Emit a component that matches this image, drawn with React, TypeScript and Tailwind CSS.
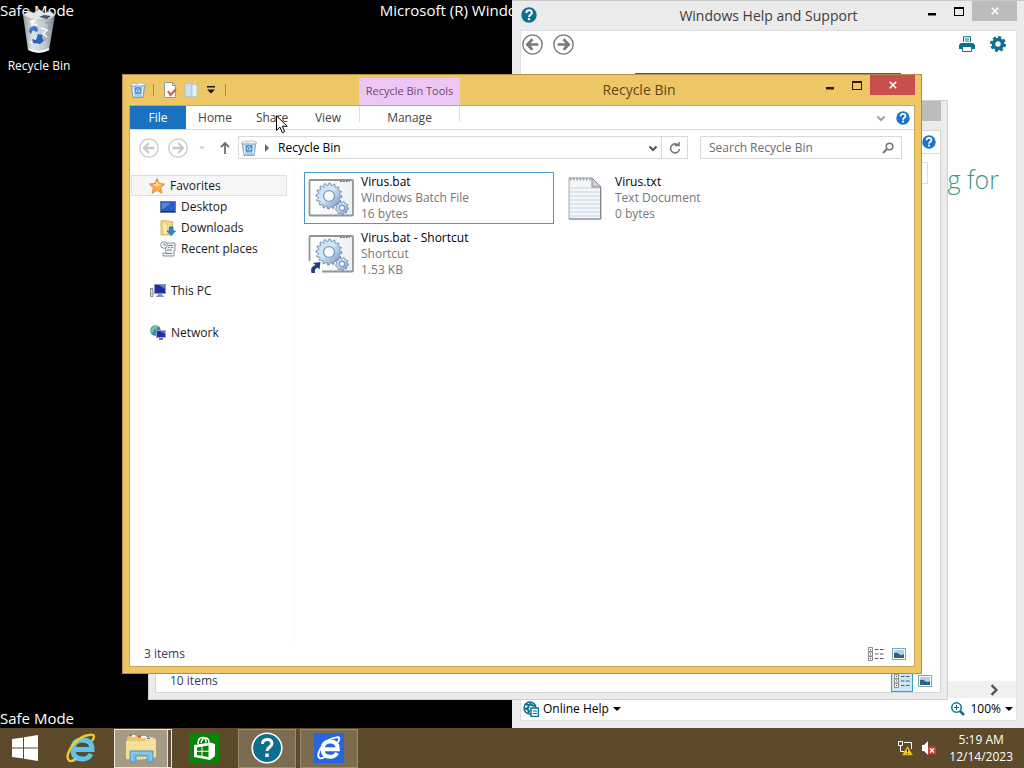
import React from "react";

function BinIcon({ className }: { className: string }) {
  return (
    <svg viewBox="0 0 16 16" className={className} aria-hidden="true">
      <path d="M1 2.500h14l-2 13H3z" fill="#a9cde8" stroke="#7b93a8" strokeWidth=".8" />
      <path d="M.8 2l3-1 3 1 3-1.400L15.200 2v1.800H.8z" fill="#eef6fb" stroke="#8ba0b0" strokeWidth=".6" />
      <path d="M3 5l1 9M13 5l-1 9" stroke="#f4fafd" strokeWidth=".9" />
      <rect x="4.800" y="5.300" width="6.400" height="6.400" rx="1" fill="#4a90d2" />
      <path d="M6.400 9.800V8l1.500-1.400L9.600 8v1.800H7.400" fill="none" stroke="#e2f1fb" strokeWidth=".9" />
    </svg>
  );
}

function DesktopBin() {
  return (
    <svg viewBox="0 0 36 46" className="h-[46px] w-9" aria-hidden="true">
      <defs>
        <linearGradient id="bin" x1="0" x2="1">
          <stop offset="0" stopColor="#94989d" />
          <stop offset=".3" stopColor="#dfe4e9" />
          <stop offset=".7" stopColor="#bcc5ce" />
          <stop offset="1" stopColor="#7b8289" />
        </linearGradient>
      </defs>
      <path d="M2 6l5 35q11 6 21 0l6-35z" fill="url(#bin)" />
      <path d="M2 6l6-4 5 2 5-4 5 4 6-2 5 4-5 4-9 1-11-1z" fill="#e4e6e7" stroke="#9aa0a6" strokeWidth=".7" />
      <path d="M18 8l5-2 7 1-4 3z" fill="#4c5258" />
      <path d="M24 14l7-1-4 4 3 2-6 3 4 3-5 3 2 4" fill="none" stroke="#8a949e" strokeWidth="1" />
      <path d="M9 13l5-2-3 4 5 1M9 34l5-3 3 5M20 19l6 2-4 4 4 3" fill="none" stroke="#fff" strokeWidth="1.500" />
      <path d="M8 23q0-6 6-6 3 1 3 5l-2 1-3-2-2 4z" fill="#3f76c8" />
      <path d="M17 25l5 1-1 2 2 4-4 3-7-1-1-4 4 1z" fill="#2c63bd" />
      <path d="M8 40q10 5 20 0" fill="none" stroke="#f3f3f3" strokeWidth="2" />
    </svg>
  );
}

function HelpDisc({ className, fill }: { className: string; fill: string }) {
  return (
    <svg viewBox="0 0 16 16" className={className} aria-hidden="true">
      <circle cx="8" cy="8" r="7.700" fill={fill} />
      <path d="M5.300 6q0-2.700 2.800-2.700T10.900 5.800q0 1.100-1.400 2T8 10" fill="none" stroke="#fff" strokeWidth="2" />
      <rect x="6.900" y="11" width="2.200" height="2.200" fill="#fff" />
    </svg>
  );
}

function CircleArrow({ className, flip }: { className: string; flip?: boolean }) {
  return (
    <svg viewBox="0 0 20 20" className={className} fill="none" stroke="currentColor" aria-hidden="true">
      <circle cx="10" cy="10" r="9.200" strokeWidth="1.300" />
      <path
        d={flip ? "M4.500 10H15M10 5l5 5-5 5" : "M15.500 10H5M10 5l-5 5 5 5"}
        strokeWidth="2.400"
      />
    </svg>
  );
}

function Chevron({ className, right }: { className: string; right?: boolean }) {
  return (
    <svg viewBox="0 0 10 10" className={className} fill="none" stroke="currentColor" strokeWidth="2" aria-hidden="true">
      <path d={right ? "M3 1l4 4-4 4" : "M1.500 3.500L5 7l3.500-3.500"} />
    </svg>
  );
}

function Caret({ className, right }: { className: string; right?: boolean }) {
  return (
    <svg viewBox="0 0 8 8" className={className} fill="currentColor" aria-hidden="true">
      <path d={right ? "M2 0l4 4-4 4z" : "M0 2h8L4 6z"} />
    </svg>
  );
}

function CaptionButtons({ closeClass, markClass }: { closeClass: string; markClass: string }) {
  return (
    <div className="flex items-start">
      <button aria-label="Minimize" className="flex h-5 w-[26px] items-center justify-center">
        <svg viewBox="0 0 26 20" className={`h-5 w-[26px] ${markClass}`}>
          <path d="M8 12h8v2.500H8z" fill="currentColor" />
        </svg>
      </button>
      <button aria-label="Maximize" className="flex h-5 w-[26px] items-center justify-center">
        <svg viewBox="0 0 26 20" className={`h-5 w-[26px] ${markClass}`}>
          <path d="M8 6h10v9H8zM9 8v6h8V8z" fill="currentColor" fillRule="evenodd" />
        </svg>
      </button>
      <button aria-label="Close" className={`flex h-5 w-[45px] items-center justify-center text-white ${closeClass}`}>
        <svg viewBox="0 0 10 10" className="h-2 w-2" stroke="currentColor" strokeWidth="2">
          <path d="M1 1l8 8M9 1L1 9" />
        </svg>
      </button>
    </div>
  );
}

function DetailsIcon() {
  return (
    <svg viewBox="0 0 16 14" className="h-3.5 w-4" aria-hidden="true">
      <path d="M.5.5h4v4h-4zM.5 5h4v4h-4zM.5 9.500h4v4h-4z" fill="#fff" stroke="#8a8a8a" />
      <path d="M2 2.500h1M2 7h1M2 11.500h1" stroke="#333" />
      <path d="M7 2.500h3.500M12 2.500h3.500M7 7h3.500M12 7h3.500M7 11.500h3.500M12 11.500h3.500" stroke="#555" />
    </svg>
  );
}

function ThumbIcon() {
  return (
    <svg viewBox="0 0 14 12" className="h-3 w-3.5" aria-hidden="true">
      <rect x=".5" y=".5" width="13" height="11" fill="#fff" stroke="#7da4ba" />
      <path d="M2 2h10v8H2z" fill="#a9d3ea" />
      <path d="M2 5q3-1 5 1t5 0v4H2z" fill="#2e6670" />
    </svg>
  );
}

function Gear({ cx, cy, r, teeth }: { cx: number; cy: number; r: number; teeth: number }) {
  const points: string[] = [];
  for (let i = 0; i < teeth * 4; i++) {
    const radius = i % 4 < 2 ? r : r * 0.82;
    const angle = (i / (teeth * 4)) * 2 * Math.PI;
    points.push(`${(cx + radius * Math.cos(angle)).toFixed(2)},${(cy + radius * Math.sin(angle)).toFixed(2)}`);
  }
  return (
    <g>
      <polygon points={points.join(" ")} fill="url(#gear)" stroke="#6f87ad" strokeWidth=".9" />
      <circle cx={cx} cy={cy} r={r * 0.42} fill="#f7f9fb" stroke="#8299c0" strokeWidth="1.300" />
    </g>
  );
}

function BatchIcon({ shortcut }: { shortcut?: boolean }) {
  return (
    <svg viewBox="0 0 46 40" className="h-10 w-[46px]" aria-hidden="true">
      <defs>
        <linearGradient id="gear" x1="0" y1="0" x2="1" y2="1">
          <stop offset="0" stopColor="#c2dcec" />
          <stop offset=".45" stopColor="#d0ebf7" />
          <stop offset="1" stopColor="#6c84b8" />
        </linearGradient>
        <linearGradient id="sheet" x1="0" y1="0" x2="1" y2="0">
          <stop offset="0" stopColor="#fff" />
          <stop offset="1" stopColor="#edf0f3" />
        </linearGradient>
      </defs>
      <rect x="1.500" y="2" width="43.500" height="35.500" rx="1" fill="url(#sheet)" stroke="#929496" strokeWidth="1.800" />
      <path d="M32 3.500h10" stroke="#777" strokeDasharray="2 1" />
      <Gear cx={21} cy={18} r={13} teeth={16} />
      <Gear cx={34} cy={30} r={6.500} teeth={9} />
      {shortcut && (
        <g>
          <path d="M0 27h14v13H0z" fill="#fff" />
          <path d="M3.500 39q-2-6 4-8L5 29l7.500-1-1 7.500-2-2Q6 35 7 39z" fill="#1f3f80" />
        </g>
      )}
    </svg>
  );
}

function TextIcon() {
  return (
    <svg viewBox="0 0 34 44" className="h-11 w-[34px]" aria-hidden="true">
      <path d="M1 2h23l9 9v32H1z" fill="#f3f7fa" stroke="#a2a6aa" />
      <path d="M2 12h30M2 16h30M2 20h30M2 24h30M2 28h30M2 32h30M2 36h30M2 40h30" stroke="#c3d3e4" />
      <path d="M24 2v9h9z" fill="#d0d3d6" stroke="#85898d" />
      <path d="M2 3h22" stroke="#9b9ea1" strokeWidth="3" strokeDasharray="1.500 1.700" />
      <path d="M32.500 11v32H1" fill="none" stroke="#85898d" />
    </svg>
  );
}

function StarIcon() {
  return (
    <svg viewBox="0 0 16 16" className="h-4 w-4" aria-hidden="true">
      <path d="M8 .5l2.300 5 5.400.5-4 3.600 1.200 5.600L8 12.300l-4.900 2.900 1.200-5.600L.3 6l5.400-.5z" fill="#fba94a" stroke="#d9822b" strokeWidth=".8" />
      <path d="M8 3l1.300 3.300 3.200.3L8 8.500 4 6.600l2.800-.3z" fill="#fee69f" />
    </svg>
  );
}

function MonitorIcon() {
  return (
    <svg viewBox="0 0 16 16" className="h-4 w-4" aria-hidden="true">
      <rect x=".5" y="2.500" width="15" height="11" fill="#2b5fc4" stroke="#6d7d93" />
      <path d="M2 4h9L3 10H2z" fill="#5088e4" />
      <path d="M1 12.500h14" stroke="#20304e" />
    </svg>
  );
}

function DownloadsIcon() {
  return (
    <svg viewBox="0 0 16 16" className="h-4 w-4" aria-hidden="true">
      <path d="M1 .8h7l4.500 1V15H1z" fill="#f1da83" stroke="#c8a94b" strokeWidth=".8" />
      <path d="M3 2l4 2v11l-4-1.500z" fill="#fdf0b5" stroke="#d3b661" strokeWidth=".5" />
      <path d="M9.500 7h3.500v4h2.500L11.200 15.500 7 11h2.500z" fill="#2d8bdc" stroke="#1a65ad" strokeWidth=".8" />
    </svg>
  );
}

function RecentIcon() {
  return (
    <svg viewBox="0 0 16 16" className="h-4 w-4" aria-hidden="true">
      <path d="M5 2h10v8h-1v5H3v-3h3z" fill="#eef0f1" stroke="#8d9297" />
      <circle cx="4" cy="4" r="3.300" fill="#fff" stroke="#8d9297" />
      <path d="M4 2v2h2M8 4.500h5M8 6.500h1.500M11 6.500h2M7 9h5M6 12.500h6" fill="none" stroke="#7d8388" />
    </svg>
  );
}

function PcIcon() {
  return (
    <svg viewBox="0 0 16 16" className="h-4 w-4" aria-hidden="true">
      <path d="M.5 5.500h2.500v8H.5z" fill="#d6d9dd" stroke="#898e95" />
      <rect x="4.500" y="1.500" width="11" height="9" fill="#1b2dac" stroke="#949aaa" />
      <path d="M9 2h6v4z" fill="#5878df" />
      <path d="M8 11h4v1.500h2V14H6v-1.500h2z" fill="#8f959c" />
    </svg>
  );
}

function NetworkIcon() {
  return (
    <svg viewBox="0 0 16 16" className="h-4 w-4" aria-hidden="true">
      <circle cx="5.500" cy="5.500" r="5.300" fill="#3389bd" />
      <path d="M1 4q3-4 7-3L6 5 4 4 3 8 1 7z" fill="#7ccb7b" />
      <rect x="6.500" y="5.500" width="9" height="7" fill="#1b2dac" stroke="#a4abb9" />
      <path d="M10 6h5v3z" fill="#5878df" />
      <path d="M9 13h4v2H9z" fill="#6f7780" />
    </svg>
  );
}

function ExplorerGlyph() {
  return (
    <svg viewBox="0 0 34 32" className="h-8 w-[34px]" aria-hidden="true">
      <path d="M3 6l2-3h7l2 2h16l1 3v18H2z" fill="#e8c670" />
      <path d="M5 4h6M17 5h5M22 7h6" stroke="#fff" strokeWidth="2" />
      <path d="M5 3.500h3" stroke="#4b9c45" strokeWidth="2" />
      <path d="M14 4.500h3" stroke="#cc503c" strokeWidth="2" />
      <path d="M23 7h3" stroke="#3680cf" strokeWidth="2" />
      <path d="M2 9h18l3-2h9v18q-14 4-30 2z" fill="#f7dc91" />
      <path d="M2 11h29M2 15h30" stroke="#fbe9b5" />
      <path d="M6 30V19h23v11h-6v-6H12v6z" fill="#74bee5" stroke="#4598c8" />
      <path d="M8 21h19v7M8 21v7" fill="none" stroke="#b8e6f8" strokeDasharray="1 1" />
    </svg>
  );
}

function IeGlyph({ className, letter, ring }: { className: string; letter: string; ring: string }) {
  return (
    <svg viewBox="0 0 30 30" className={className} fill="none" aria-hidden="true">
      <path d="M9 16.500h17q0-9.500-9.500-9.500T7 16.500 16.500 26q6 0 8.500-5" stroke={letter} strokeWidth="5" />
      <path d="M26 8q5-8-3-6Q14 3 6 13-1 24 3 27.500q2.500 1.500 7-1.500" stroke={ring} strokeWidth="2.400" />
    </svg>
  );
}

function StoreGlyph() {
  return (
    <svg viewBox="0 0 30 30" className="h-[30px] w-[30px]" aria-hidden="true">
      <path d="M0 0h30v30H0z" fill="#078507" />
      <path d="M5 12l16-2.500 5 1.500v12l-5 4-16-3z" fill="#fff" />
      <path d="M9 11q0-6 4-6.500t4 5M12 10q1-5 4.500-5t3.500 5" fill="none" stroke="#fff" strokeWidth="1.500" />
      <path d="M8 14.500l4.500-.8v4H8zM13.500 13.500l6-1v5.200h-6zM8 18.700h4.500v4L8 22zM13.500 18.700h6v5.200l-6-1z" fill="#078507" />
    </svg>
  );
}

function ViewToggles({ active }: { active?: boolean }) {
  return (
    <div className="flex items-center">
      <button
        aria-label="Details view"
        className={`flex h-[22px] w-[22px] items-center justify-center border ${active ? "border-[#3c9cc9] bg-[#c9e8f7]" : "border-transparent"}`}
      >
        <DetailsIcon />
      </button>
      <button aria-label="Large icons view" className="flex h-[22px] w-6 items-center justify-center">
        <ThumbIcon />
      </button>
    </div>
  );
}

function HelpWindow() {
  return (
    <section aria-label="Windows Help and Support" className="absolute inset-y-0 right-0 left-[512px] flex flex-col border-t border-[#c9c9c9] bg-[#ebebeb] pr-[7px] pb-[7px] pl-2">
      <header className="flex h-[29px] shrink-0 items-start">
        <HelpDisc className="mt-1.5 ml-px h-4 w-4" fill="#0b708f" />
        <h2 className="flex-1 pl-20 text-center text-sm leading-[30px] text-[#3c3c3c]">Windows Help and Support</h2>
        <CaptionButtons closeClass="bg-[#bcbcbc]" markClass="text-black" />
      </header>
      <div className="flex min-h-0 flex-1 flex-col border border-[#e0e0e0] bg-white">
        <div className="flex h-[26px] shrink-0 items-center gap-2.5 pr-2.5 pl-px text-[#777]">
          <button aria-label="Back"><CircleArrow className="h-[21px] w-[21px]" /></button>
          <button aria-label="Forward"><CircleArrow className="h-[21px] w-[21px]" flip /></button>
          <div className="flex-1" />
          <button aria-label="Print" className="text-[#0b708f]">
            <svg viewBox="0 0 16 16" className="h-4 w-4">
              <path d="M4.500 6V.7h7V6" fill="#fff" stroke="currentColor" />
              <path d="M6 3h4M6 5h4" stroke="currentColor" />
              <path d="M0 9l2-2h12l2 2v4H0z" fill="currentColor" />
              <path d="M3.500 10.500h9v5h-9z" fill="#fff" stroke="currentColor" />
            </svg>
          </button>
          <button aria-label="Settings" className="pl-[5px] text-[#0b708f]">
            <svg viewBox="0 0 16 16" className="h-4 w-4" fill="none" stroke="currentColor">
              <circle cx="8" cy="8" r="4.500" strokeWidth="3.600" />
              <circle cx="8" cy="8" r="6.800" strokeWidth="2.400" strokeDasharray="3 2.340" />
            </svg>
          </button>
        </div>
        <div className="flex justify-end pt-4 pr-[115px]">
          <input aria-label="Search help" className="h-7 w-[266px] border border-[#6b513c] bg-white" />
        </div>
        <h3 className="mt-14 pr-[17px] text-right text-[25px] leading-[44px] font-light whitespace-nowrap text-[#3a9a87]">
          What are you looking for
        </h3>
        <div className="flex-1" />
        <div className="flex h-[17px] items-center justify-end bg-[#f0f0f0] pr-4 text-[#555]">
          <button aria-label="Scroll right"><Chevron className="h-3 w-3" right /></button>
        </div>
        <footer className="flex h-[22px] shrink-0 items-center justify-between pr-[3px] pl-0.5 text-xs text-black">
          <button className="flex items-center gap-1">
            <svg viewBox="0 0 16 16" className="h-4 w-4" fill="none" stroke="#0b708f" aria-hidden="true">
              <circle cx="7" cy="7" r="6" strokeWidth="1.500" />
              <path d="M2 3l4 1-1 3-3 1M7 1l1 3 4 1M4 8l2 2-1 2" strokeWidth="2" />
              <path d="M8 7h7.500v8.500H8z" fill="#fff" strokeWidth="1.500" />
              <path d="M10 10h4M10 12.500h4" />
            </svg>
            Online Help
            <Caret className="h-2 w-2" />
          </button>
          <button className="flex items-center gap-1">
            <svg viewBox="0 0 16 16" className="h-4 w-4" fill="none" stroke="#0b708f" aria-hidden="true">
              <circle cx="6.500" cy="6.500" r="4.700" strokeWidth="1.500" />
              <path d="M10 10l4 4" strokeWidth="2.500" />
              <path d="M4 6.500h5M6.500 4v5" />
            </svg>
            100%
            <Caret className="h-2 w-2" />
          </button>
        </footer>
      </div>
    </section>
  );
}

function BackWindow() {
  return (
    <section aria-label="File Explorer" className="absolute top-[100px] left-[148px] flex h-[600px] w-[800px] flex-col border border-[#d0d0d0] bg-[#ebebeb] px-1.5 pb-1.5">
      <header className="flex h-[29px] shrink-0 justify-end">
        <button aria-label="Close" className="h-5 w-[45px] bg-[#bcbcbc]" />
      </header>
      <div className="flex flex-1 flex-col border border-[#d4d4d4] bg-white">
        <div className="flex h-[23px] items-center justify-end border-b border-[#dcdcdc] pr-1">
          <HelpDisc className="h-3.5 w-3.5" fill="#1c74c8" />
        </div>
        <div className="flex justify-end pt-2 pr-3">
          <div className="h-[22px] w-[200px] border border-[#dcdcdc]" />
        </div>
        <div className="flex-1" />
        <footer className="flex h-[22px] items-center justify-between pr-[3px] pl-3.5 text-xs text-[#30405a]">
          <span>10 items</span>
          <ViewToggles active />
        </footer>
      </div>
    </section>
  );
}

const navRows = [
  { name: "Favorites", icon: <StarIcon />, row: "ml-px mr-[7px] border border-[#dedede] bg-[#f6f6f6] pl-[17px]" },
  { name: "Desktop", icon: <MonitorIcon />, row: "pl-[30px]" },
  { name: "Downloads", icon: <DownloadsIcon />, row: "pl-[30px]" },
  { name: "Recent places", icon: <RecentIcon />, row: "pl-[30px]" },
  { name: "This PC", icon: <PcIcon />, row: "mt-[21px] pl-5" },
  { name: "Network", icon: <NetworkIcon />, row: "mt-[21px] pl-5" },
];

const files = [
  { name: "Virus.bat", kind: "Windows Batch File", size: "16 bytes", icon: <BatchIcon />, selected: true },
  { name: "Virus.txt", kind: "Text Document", size: "0 bytes", icon: <TextIcon />, selected: false },
  { name: "Virus.bat - Shortcut", kind: "Shortcut", size: "1.53 KB", icon: <BatchIcon shortcut />, selected: false },
];

function RecycleWindow() {
  return (
    <section aria-label="Recycle Bin" className="absolute top-[74px] left-[122px] flex h-[600px] w-[800px] flex-col border border-[#b18f48] bg-[#edc766] px-1.5 pb-1.5">
      <header className="flex h-[30px] shrink-0 items-start pl-px">
        <div className="flex h-[30px] items-center">
          <BinIcon className="h-4 w-4" />
          <span className="mr-2 ml-[7px] h-3 w-px bg-[#a98a4a]" />
          <button aria-label="Properties">
            <svg viewBox="0 0 16 16" className="h-4 w-4">
              <path d="M2.500.5h8l3 3v12h-11z" fill="#fff" stroke="#999" />
              <path d="M10.500.5v3h3" fill="none" stroke="#999" />
              <path d="M6 9l2.500 4L14 7" fill="none" stroke="#dd5f42" strokeWidth="2.200" />
            </svg>
          </button>
          <button aria-label="New folder" className="ml-[5px]">
            <svg viewBox="0 0 16 16" className="h-4 w-4">
              <path d="M2 2l7-1v14l-7-1z" fill="#cbe0f2" stroke="#a9c2da" />
              <path d="M9 2l5 1v11l-5 1z" fill="#e8f1f8" stroke="#b5c6d6" />
            </svg>
          </button>
          <button aria-label="Customize toolbar" className="ml-2">
            <svg viewBox="0 0 8 8" className="h-2 w-2">
              <path d="M0 0h8v1.500H0zM0 3.500h8L4 7.500z" fill="#1c1508" />
            </svg>
          </button>
          <span className="ml-2.5 h-3 w-px bg-[#a98a4a]" />
        </div>
        <div className="ml-[133px] mt-[3px] flex h-[27px] w-[101px] items-center justify-center bg-[#edc7f4] text-[11px] whitespace-nowrap text-[#6b4a70]">
          Recycle Bin Tools
        </div>
        <h1 className="flex-1 text-center text-sm leading-[30px] text-[#5c4716]">Recycle Bin</h1>
        <CaptionButtons closeClass="bg-[#c94f4f]" markClass="text-[#2c1c05]" />
      </header>
      <div className="flex min-h-0 flex-1 flex-col border border-[#c9a758] bg-white">
        <nav className="flex h-6 shrink-0 border-b border-[#dadbdc] text-xs text-[#444]">
          <button className="h-[23px] w-14 bg-[#1a73c2] text-white">File</button>
          <button className="w-[58px]">Home</button>
          <button className="w-14">Share</button>
          <button className="w-14">View</button>
          <div className="ml-[3px] flex h-4 w-[101px] items-start border-x border-[#e5dce7]">
            <button className="h-6 flex-1">Manage</button>
          </div>
          <div className="flex flex-1 items-center justify-end gap-2.5 pr-1">
            <button aria-label="Expand ribbon" className="text-[#a0a0a0]"><Chevron className="h-2.5 w-2.5" /></button>
            <button aria-label="Help"><HelpDisc className="h-3.5 w-3.5" fill="#1c74c8" /></button>
          </div>
        </nav>
        <div className="flex h-[35px] shrink-0 items-center pr-3 pl-[9px] text-xs">
          <button aria-label="Back" className="text-[#c9c9c9]"><CircleArrow className="h-5 w-5" /></button>
          <button aria-label="Forward" className="ml-[9px] text-[#c9c9c9]"><CircleArrow className="h-5 w-5" flip /></button>
          <button aria-label="Recent locations" className="ml-[11px] text-[#c9c9c9]"><Caret className="h-1.5 w-1.5" /></button>
          <button aria-label="Up" className="ml-3.5 text-[#707070]">
            <svg viewBox="0 0 12 14" className="h-3.5 w-3" fill="none" stroke="currentColor" strokeWidth="1.800">
              <path d="M6 13V2M2 6l4-4 4 4" />
            </svg>
          </button>
          <div className="ml-[7px] flex h-[23px] flex-1 items-center border border-[#d9d9d9] pl-0.5">
            <BinIcon className="h-4 w-4" />
            <Caret className="mr-[7px] ml-1.5 h-2 w-2 text-[#666]" right />
            <span className="flex-1 text-black">Recycle Bin</span>
            <button aria-label="Previous locations" className="mr-[3px] text-[#555]"><Chevron className="h-2.5 w-2.5" /></button>
            <button aria-label="Refresh" className="flex h-full w-[26px] items-center justify-center border-l border-[#d9d9d9] text-[#777]">
              <svg viewBox="0 0 12 12" className="h-3 w-3" fill="none" stroke="currentColor" strokeWidth="1.600">
                <path d="M9.500 3.500A4.500 4.500 0 1 0 10.500 7M6 3.500h4V0" />
              </svg>
            </button>
          </div>
          <div className="ml-3 flex h-[23px] w-[202px] items-center border border-[#d9d9d9] pr-[7px] pl-2">
            <input aria-label="Search Recycle Bin" placeholder="Search Recycle Bin" className="min-w-0 flex-1 outline-none placeholder:text-[#6d6d6d]" />
            <svg viewBox="0 0 12 12" className="h-3 w-3" fill="none" stroke="#777" aria-hidden="true">
              <circle cx="7.500" cy="4.500" r="3.300" strokeWidth="1.600" />
              <path d="M5 7L1 11" strokeWidth="2.200" />
            </svg>
          </div>
        </div>
        <div className="flex min-h-0 flex-1">
          <ul className="w-[165px] shrink-0 border-r border-[#f7f7f7] pt-2.5 text-xs text-[#1a1a1a]">
            {navRows.map((r) => (
              <li key={r.name} className={`flex h-[21px] items-center gap-[5px] ${r.row}`}>
                {r.icon}
                {r.name}
              </li>
            ))}
          </ul>
          <ul className="grid flex-1 auto-rows-[52px] grid-cols-[250px_250px] content-start gap-1 pt-[7px] pl-[9px]">
            {files.map((f) => (
              <li
                key={f.name}
                className={`flex items-center gap-[7px] border px-[3px] text-xs leading-4 ${f.selected ? "border-[#4b95c9]" : "border-transparent"}`}
              >
                <span className="flex w-[46px] justify-center">{f.icon}</span>
                <div className="text-[#777]">
                  <p className="text-black">{f.name}</p>
                  <p>{f.kind}</p>
                  <p>{f.size}</p>
                </div>
              </li>
            ))}
          </ul>
        </div>
        <footer className="flex h-6 shrink-0 items-center justify-between pr-[3px] pl-3.5 text-xs text-[#30405a]">
          <span>3 items</span>
          <ViewToggles />
        </footer>
      </div>
    </section>
  );
}

function Taskbar() {
  const item = "flex h-[39px] w-[58px] items-center justify-center";
  return (
    <footer className="flex h-10 shrink-0 items-center bg-[#5c4a2a] text-white">
      <button aria-label="Start" className="flex h-10 w-[50px] items-center justify-center">
        <svg viewBox="0 0 26 26" className="h-[26px] w-[26px]" fill="#fff">
          <path d="M0 4l11-1.600V12.400H0zM12 2.200L26 0v12.400H12zM0 13.600h11v10L0 22zM12 13.600h14V26l-14-2.200z" />
        </svg>
      </button>
      <button aria-label="Internet Explorer" className={`${item} ml-0.5`}><IeGlyph className="h-[30px] w-[30px]" letter="#5cc5ec" ring="#f0c834" /></button>
      <button aria-label="File Explorer" className="ml-1 flex h-[39px] w-[58px] border border-[#e9e5da] bg-[#a59a85]">
        <span className="flex h-full flex-1 items-center justify-center border-r border-[#e9e5da]"><ExplorerGlyph /></span>
        <span className="w-[3px] bg-[#5f5443]" />
      </button>
      <button aria-label="Store" className={`${item} ml-[3px]`}><StoreGlyph /></button>
      <button aria-label="Help and Support" className={`${item} ml-[5px] border border-[#9a8d72] bg-[#7b6c50]`}>
        <svg viewBox="0 0 32 32" className="h-8 w-8">
          <circle cx="16" cy="16" r="14.800" fill="#0b708f" stroke="#fff" strokeWidth="1.600" />
          <path d="M11.500 12q0-4.500 4.700-4.500t4.700 4q0 2-2.400 3.800T16 19" fill="none" stroke="#fff" strokeWidth="3" />
          <path d="M14.300 21.500h3.400v3.400h-3.400z" fill="#fff" />
        </svg>
      </button>
      <button aria-label="Web browser" className={`${item} ml-1 border border-[#9a8d72] bg-[#7b6c50]`}>
        <span className="flex h-[30px] w-[30px] items-center justify-center bg-[#2765e0]"><IeGlyph className="h-6 w-6" letter="#fff" ring="#fff" /></span>
      </button>
      <div className="flex-1" />
      <button aria-label="Network status" className="mr-2">
        <svg viewBox="0 0 16 16" className="h-4 w-4" fill="none" stroke="#fff">
          <path d="M1.500 1.500h4v4h-4zM3.500 5.500v6H6M7 2.500h7.500V9M5 11.500h3" />
          <path d="M10.500 6.500l5 8.500h-10z" fill="#f5c52a" stroke="#d9a51a" strokeWidth=".6" />
          <path d="M10.500 9v3M10.500 13v1" stroke="#222" />
        </svg>
      </button>
      <button aria-label="Muted" className="mr-3">
        <svg viewBox="0 0 16 16" className="h-4 w-4">
          <path d="M1 5h2l4-4v14l-4-4H1z" fill="#fff" />
          <path d="M7 6.500h8v8H7z" fill="#cf3a35" />
          <path d="M9 8.500l4 4M13 8.500l-4 4" stroke="#fff" strokeWidth="1.500" />
        </svg>
      </button>
      <time className="mr-[11px] text-center text-xs leading-[17px]">
        5:19 AM
        <br />
        12/14/2023
      </time>
    </footer>
  );
}

export default function App() {
  return (
    <div className="flex h-screen min-h-[720px] flex-col overflow-hidden bg-black font-['Open_Sans','Noto_Sans',sans-serif] [&_p]:whitespace-nowrap">
      <main className="relative min-h-0 flex-1 overflow-hidden">
        <div className="flex h-full flex-col justify-between text-[15px] leading-5 text-white">
          <div className="grid grid-cols-3">
            <span>Safe Mode</span>
            <span className="text-center whitespace-nowrap">Microsoft (R) Windows (R) (Build 9600)</span>
          </div>
          <span>Safe Mode</span>
        </div>
        <button className="absolute top-[9px] left-0.5 flex w-[74px] flex-col items-center gap-0.5 text-xs leading-[18px] whitespace-nowrap text-white">
          <DesktopBin />
          Recycle Bin
        </button>
        <HelpWindow />
        <BackWindow />
        <RecycleWindow />
        <svg viewBox="0 0 12 19" className="pointer-events-none absolute top-[115px] left-[276px] h-[19px] w-3" aria-hidden="true">
          <path d="M.5.8v14.500l3.500-3.200 2.300 5.600 2.400-1-2.400-5.400h4.900z" fill="#fff" stroke="#000" />
        </svg>
      </main>
      <Taskbar />
    </div>
  );
}
